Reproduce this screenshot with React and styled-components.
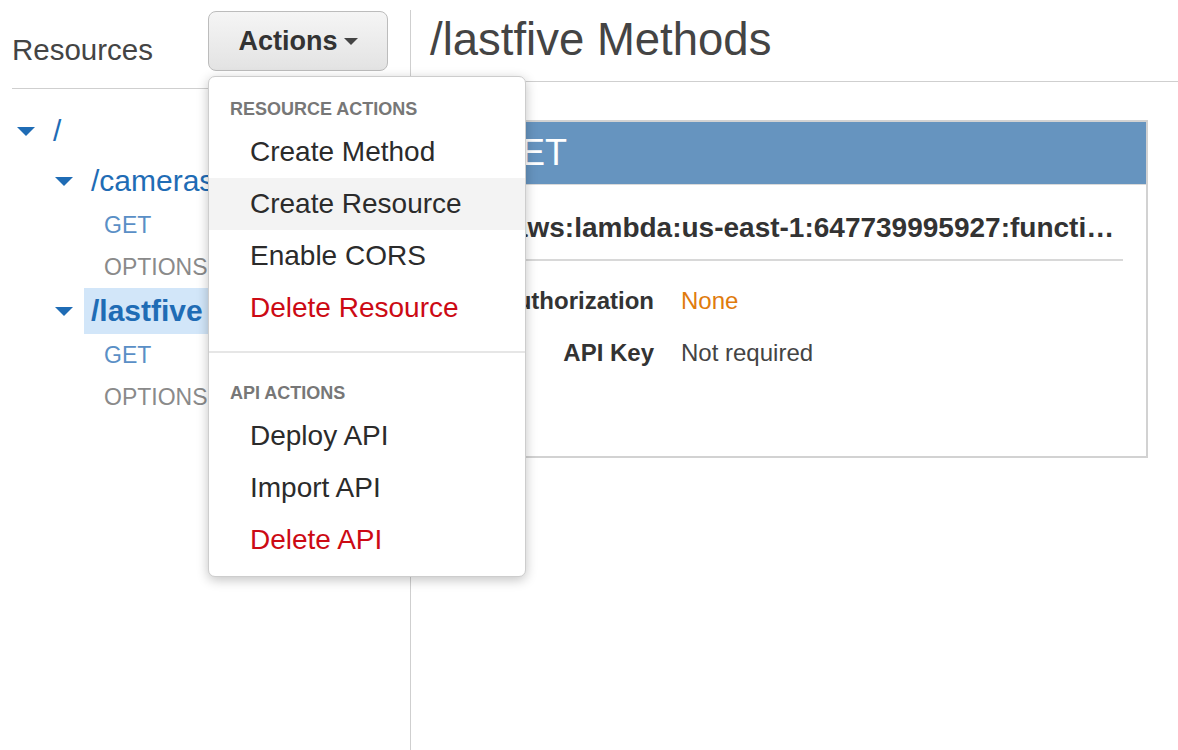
import React from 'react';
import styled, { createGlobalStyle } from 'styled-components';

const GlobalStyle = createGlobalStyle`
  html, body {
    margin: 0;
    padding: 0;
    background: #ffffff;
    font-family: 'Liberation Sans', Arial, sans-serif;
    color: #333;
  }
`;

const Page = styled.div`
  display: flex;
  min-height: 100vh;
  padding-top: 10px;
  box-sizing: border-box;
  overflow: hidden;
`;

const Sidebar = styled.aside`
  width: 411px;
  flex-shrink: 0;
  border-right: 1px solid #cfcfcf;
  padding-left: 12px;
  box-sizing: border-box;
  min-height: calc(100vh - 10px);
`;

const SidebarHeader = styled.div`
  display: flex;
  align-items: flex-start;
  justify-content: space-between;
  height: 77px;
  padding: 1px 22px 0 0;
  border-bottom: 1px solid #cfcfcf;
`;

const SidebarTitle = styled.h2`
  margin: 0;
  padding-top: 24px;
  font-size: 29.5px;
  line-height: 30px;
  font-weight: normal;
  color: #444;
`;

const ActionsWrap = styled.div`
  position: relative;
`;

const ActionsButton = styled.button`
  display: flex;
  align-items: center;
  justify-content: center;
  gap: 6px;
  width: 180px;
  height: 60px;
  border: 1px solid #bcbcbc;
  border-radius: 8px;
  background: linear-gradient(#f5f5f5, #e3e3e3);
  font-family: inherit;
  font-size: 27px;
  font-weight: bold;
  color: #333;
  cursor: pointer;
  padding: 0;
`;

const Caret = styled.span`
  display: inline-block;
  width: 0;
  height: 0;
  border-left: ${p => p.$size}px solid transparent;
  border-right: ${p => p.$size}px solid transparent;
  border-top: ${p => Math.round(p.$size * 1.05)}px solid ${p => p.$color};
`;

const Menu = styled.div`
  position: absolute;
  top: 65px;
  left: 0;
  width: 318px;
  box-sizing: border-box;
  background: #fff;
  border: 1px solid #cdcdcd;
  border-radius: 7px;
  box-shadow: 0 3px 12px rgba(0, 0, 0, 0.24);
  padding: 20px 0 10px;
  z-index: 10;
`;

const MenuHeading = styled.div`
  height: 24px;
  line-height: 24px;
  padding-left: 21px;
  margin: ${p => (p.$first ? '0' : '28px')} 0 5px;
  font-size: 18px;
  font-weight: bold;
  color: #777;
  text-transform: uppercase;
`;

const MenuItem = styled.div`
  height: 52px;
  line-height: 52px;
  padding-left: 41px;
  font-size: 28px;
  color: ${p => (p.$danger ? '#cc0a14' : '#2b2b2b')};
  background: ${p => (p.$hover ? '#f3f3f3' : 'transparent')};
  cursor: pointer;
`;

const MenuDivider = styled.div`
  height: 2px;
  background: #e6e6e6;
  margin-top: 17px;
`;

const Tree = styled.div`
  padding-top: 19px;
`;

const ResourceRow = styled.div`
  display: flex;
  align-items: center;
  height: 46px;
  padding-left: ${p => p.$depth * 38}px;
  margin-bottom: ${p => (p.$depth === 0 ? '4px' : '0')};
`;

const Toggle = styled.span`
  display: flex;
  width: 18px;
  margin-left: 5px;
  margin-right: 11px;
`;

const ResourceName = styled.span`
  height: 46px;
  line-height: 46px;
  padding: 0 7px;
  font-size: 30px;
  color: #1f6cb5;
  font-weight: ${p => (p.$selected ? 'bold' : 'normal')};
  background: ${p => (p.$selected ? '#d2e6f9' : 'transparent')};
  flex: ${p => (p.$selected ? '1' : '0 0 auto')};
  white-space: nowrap;
`;

const MethodRow = styled.div`
  height: 42px;
  line-height: 42px;
  padding-left: 92px;
  font-size: 23px;
  color: ${p => (p.$method === 'GET' ? '#5a8fc6' : '#8a8a8a')};
`;

const Main = styled.main`
  flex: 1;
  min-width: 0;
`;

const MainHeader = styled.div`
  height: 72px;
  box-sizing: border-box;
  padding: 4px 0 0 19px;
  border-bottom: 1px solid #cfcfcf;
`;

const MainTitle = styled.h1`
  margin: 0;
  font-size: 45.5px;
  line-height: 52px;
  font-weight: normal;
  color: #444;
`;

const MethodCard = styled.section`
  margin: 38px 30px 0 19px;
  border: 2px solid #d2d2d2;
  height: 338px;
  box-sizing: border-box;
`;

const CardHeader = styled.div`
  height: 62px;
  line-height: 62px;
  background: #6694bf;
  border-bottom: 1px solid #d9d9d9;
  padding-left: 61px;
  font-size: 36px;
  color: #fff;
`;

const CardBody = styled.div`
  padding: 0 23px 0 27px;
`;

const Arn = styled.div`
  padding: 28px 0 16px;
  line-height: 30px;
  font-size: 28px;
  font-weight: bold;
  color: #333;
  border-bottom: 2px solid #d8d8d8;
  white-space: nowrap;
  overflow: hidden;
  text-overflow: ellipsis;
`;

const Details = styled.dl`
  display: grid;
  grid-template-columns: 195px 1fr;
  column-gap: 27px;
  row-gap: 24px;
  margin: 26px 0 0;
  line-height: 28px;
  font-size: 24px;
`;

const Label = styled.dt`
  text-align: right;
  font-weight: bold;
  color: #333;
`;

const Value = styled.dd`
  margin: 0;
  color: ${p => (p.$accent ? '#e07b0d' : '#444')};
`;

const resources = [
  { path: '/', depth: 0, methods: [] },
  { path: '/cameras', depth: 1, methods: ['GET', 'OPTIONS'] },
  { path: '/lastfive', depth: 1, methods: ['GET', 'OPTIONS'], selected: true },
];

const menuSections = [
  {
    title: 'Resource Actions',
    items: [
      { label: 'Create Method' },
      { label: 'Create Resource', hover: true },
      { label: 'Enable CORS' },
      { label: 'Delete Resource', danger: true },
    ],
  },
  {
    title: 'API Actions',
    items: [
      { label: 'Deploy API' },
      { label: 'Import API' },
      { label: 'Delete API', danger: true },
    ],
  },
];

export default function App() {
  return (
    <>
      <GlobalStyle />
      <Page>
        <Sidebar>
          <SidebarHeader>
            <SidebarTitle>Resources</SidebarTitle>
            <ActionsWrap>
              <ActionsButton>
                Actions
                <Caret $size={7} $color="#444" />
              </ActionsButton>
              <Menu>
                {menuSections.map((section, i) => (
                  <React.Fragment key={section.title}>
                    {i > 0 && <MenuDivider />}
                    <MenuHeading $first={i === 0}>{section.title}</MenuHeading>
                    {section.items.map(item => (
                      <MenuItem key={item.label} $danger={item.danger} $hover={item.hover}>
                        {item.label}
                      </MenuItem>
                    ))}
                  </React.Fragment>
                ))}
              </Menu>
            </ActionsWrap>
          </SidebarHeader>

          <Tree>
            {resources.map(res => (
              <React.Fragment key={res.path}>
                <ResourceRow $depth={res.depth}>
                  <Toggle>
                    <Caret $size={9} $color="#1f6cb5" />
                  </Toggle>
                  <ResourceName $selected={res.selected}>{res.path}</ResourceName>
                </ResourceRow>
                {res.methods.map(m => (
                  <MethodRow key={m} $method={m}>{m}</MethodRow>
                ))}
              </React.Fragment>
            ))}
          </Tree>
        </Sidebar>

        <Main>
          <MainHeader>
            <MainTitle>/lastfive Methods</MainTitle>
          </MainHeader>
          <MethodCard>
            <CardHeader>GET</CardHeader>
            <CardBody>
              <Arn>arn:aws:lambda:us-east-1:647739995927:function:lastFiveImages</Arn>
              <Details>
                <Label>Authorization</Label>
                <Value $accent>None</Value>
                <Label>API Key</Label>
                <Value>Not required</Value>
              </Details>
            </CardBody>
          </MethodCard>
        </Main>
      </Page>
    </>
  );
}
